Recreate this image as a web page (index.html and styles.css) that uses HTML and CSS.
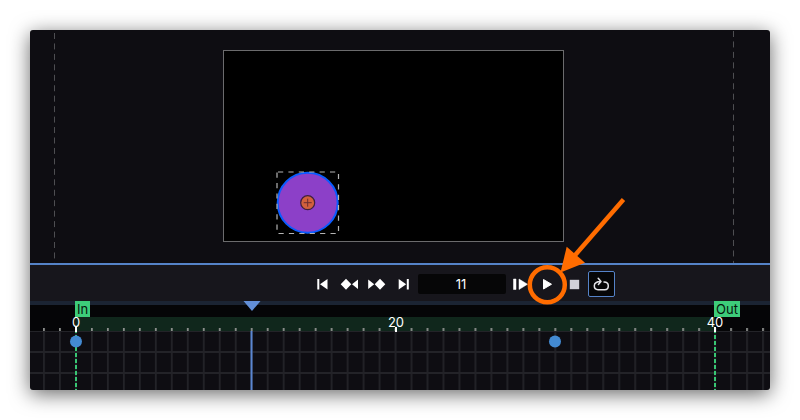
FILE: index.html
```html
<!DOCTYPE html>
<html lang="en">
<head>
<meta charset="utf-8">
<title>Animation editor</title>
<link rel="stylesheet" href="styles.css">
</head>
<body>
<main class="editor">
  <section class="viewport" aria-label="Canvas">
    <svg class="guide" aria-hidden="true"><path d="M0.5 3V233"/></svg>
    <div class="stage">
      <svg class="shape" viewBox="0 0 64 64" aria-label="Selected circle">
        <circle cx="31.7" cy="31.7" r="30" fill="#8c40c8" stroke="#0a5cff" stroke-width="2"/>
        <rect x="1" y="1" width="61.5" height="61.5" fill="none" stroke="#b4b4b4" stroke-width="1.2" stroke-dasharray="5.2 5.2" stroke-dashoffset="-1"/>
        <circle cx="31.7" cy="31.7" r="7" fill="#d2603c" stroke="#40203c" stroke-width="1.2"/>
        <path d="M31.7 27.7v8M27.7 31.7h8" stroke="#6a2c30" stroke-width="1"/>
      </svg>
    </div>
    <svg class="guide" aria-hidden="true"><path d="M0.5 1V233"/></svg>
  </section>

  <section class="controls" aria-label="Playback">
    <button class="control" aria-label="Go to start"><svg viewBox="0 0 27 26"><path d="M8.3 8h2v10.500h-2zM18.500 8v10.500L11 13.250z"/></svg></button>
    <button class="control" aria-label="Previous keyframe"><svg viewBox="0 0 27 26"><path d="M10 7.700L15.300 13.200L10 18.700L4.700 13.200zM22 8.500v9.500L16 13.250z"/></svg></button>
    <button class="control" aria-label="Next keyframe"><svg viewBox="0 0 27 26"><path d="M17 7.700L22.300 13.200L17 18.700L11.700 13.200zM5.200 8.500v9.500L11.200 13.250z"/></svg></button>
    <button class="control" aria-label="Go to end"><svg viewBox="0 0 27 26"><path d="M16.800 8h2v10.500h-2zM8.700 8v10.500L16.200 13.250z"/></svg></button>
    <input class="frame" type="text" value="11" aria-label="Current frame">
    <button class="control" aria-label="Step forward"><svg viewBox="0 0 27 26"><path d="M6.500 8H9v10.500H6.500zM12 8v10.500L20.500 13.250z" stroke="#fff" stroke-width="0.500"/></svg></button>
    <button class="control play" aria-label="Play"><svg viewBox="0 0 27 26"><path d="M9.500 8.500v9.500L17.500 13.250z" stroke="#fff" stroke-linejoin="round"/></svg>
      <svg class="callout" viewBox="0 0 110 120" aria-hidden="true">
        <circle cx="24.300" cy="92.700" r="17.500"/>
        <path d="M100.500 7.500L50 65.500"/>
        <path class="head" d="M37.500 80.500L43.700 54.700L62 70.700z"/>
      </svg>
    </button>
    <button class="control" aria-label="Stop"><svg viewBox="0 0 27 26"><path d="M8.800 8.800h9.400v9.400H8.800z" fill="#d2d1d9"/></svg></button>
    <button class="control loop" aria-label="Loop" aria-pressed="true"><svg viewBox="0 0 27 26"><path d="M12.500 10.800H10M8.300 11.500C6.900 12.200 6.300 13.300 6.300 14.800C6.300 17 7.500 18.700 10 18.700H16.800C19.300 18.700 20.300 17 20.300 14.700S19.300 10.900 16 10.900M8.300 11.500L10 10.800M10.200 7.300L13 10.500L10.400 13.500" fill="none" stroke="#e4e4e8" stroke-width="1.500" stroke-linecap="round" stroke-linejoin="round"/></svg></button>
  </section>

  <section class="timeline" aria-label="Timeline">
    <svg class="grid" aria-hidden="true">
      <defs>
        <pattern id="columns" x="45" y="41" width="15.980" height="21" patternUnits="userSpaceOnUse">
          <path d="M0 10h16" stroke="#232328" stroke-width="2"/>
          <path d="M0.900 0v21" stroke="#232328" stroke-width="1.800"/>
        </pattern>
        <pattern id="ticks" x="45" y="0" width="15.980" height="40" patternUnits="userSpaceOnUse">
          <path d="M0 27h1.800v3H0z" fill="#8f918f"/>
        </pattern>
      </defs>
      <rect width="100%" height="4" fill="#1b2433"/>
      <rect y="4" width="100%" height="26" fill="#050507"/>
      <rect x="45" y="16" width="640" height="14" fill="#10271c"/>
      <rect y="30" width="100%" height="59" fill="url(#columns)"/>
      <rect y="26" width="100%" height="4" fill="url(#ticks)"/>
      <path d="M46 28v61M685 28v61" stroke="#38c673" stroke-width="2" stroke-dasharray="4 2"/>
      <path d="M46 26v5M366 26v5M685 26v5" stroke="#fff" stroke-width="2"/>
      <path d="M221.500 30v59" stroke="#5a86d2" stroke-width="2"/>
      <path d="M213.500 0h17L222 10z" fill="#628fd8"/>
      <circle cx="46" cy="40.500" r="6" fill="#438ad2"/>
      <circle cx="525" cy="40.500" r="6" fill="#438ad2"/>
    </svg>
    <span class="flag start">In</span>
    <span class="flag end">Out</span>
    <span class="number start">0</span>
    <span class="number middle">20</span>
    <span class="number end">40</span>
  </section>
</main>
</body>
</html>
```
FILE: styles.css
```css
* {
  box-sizing: border-box;
}

body {
  margin: 0;
  padding: 30px;
  background: #fff;
  font-family: Inter, "Liberation Sans", sans-serif;
}

.editor {
  border-radius: 3px;
  background: #0e0d12;
  box-shadow: 0 4px 20px rgba(0, 0, 0, 0.6);
}

.viewport {
  display: flex;
  justify-content: space-between;
  padding: 0 36px 0 24px;
  border-bottom: 2px solid #5583c8;
}

.guide {
  width: 1px;
  height: 233px;
  stroke: #4e4e52;
  stroke-width: 1;
  stroke-dasharray: 6 4.45;
}

.stage {
  position: relative;
  width: 341px;
  height: 192px;
  margin: 20px 1px 21px 0;
  border: 1px solid #6b6b6d;
  background: #000;
}

.shape {
  position: absolute;
  left: 52px;
  top: 120px;
  width: 64px;
  height: 64px;
}

.controls {
  display: flex;
  align-items: center;
  height: 36px;
  padding: 2px 0 0 279px;
  background: #17161c;
}

.control {
  display: block;
  width: 27px;
  height: 26px;
  padding: 0;
  border: 0;
  background: none;
}

.control svg {
  display: block;
  width: 27px;
  height: 26px;
  fill: #fff;
}

.frame {
  width: 88px;
  height: 20px;
  margin: 0 1px;
  padding: 0 2px 0 0;
  border: 0;
  border-radius: 2px;
  background: #060607;
  color: #fff;
  font: 13px Inter, "Liberation Sans", sans-serif;
  text-align: center;
}

.play {
  position: relative;
}

.control .callout {
  position: absolute;
  left: -11px;
  top: -79px;
  z-index: 1;
  width: 110px;
  height: 120px;
  fill: none;
  stroke: #ff6c00;
  stroke-width: 4.5;
  pointer-events: none;
}

.callout .head {
  fill: #ff6c00;
  stroke: none;
}

.loop {
  outline: 1px solid #5583c8;
  outline-offset: -1px;
  border-radius: 2px;
  background: #060607;
}

.timeline {
  position: relative;
  overflow: hidden;
  border-radius: 0 0 3px 3px;
}

.grid {
  display: block;
  width: 100%;
  height: 89px;
}

.flag,
.number {
  position: absolute;
  font-size: 13px;
  line-height: 16px;
}

.flag {
  top: 0;
  padding: 0 2px;
  background: #3dcc7a;
  color: #07150d;
}

.flag.start {
  left: 45px;
}

.flag.end {
  left: 684px;
}

.number {
  top: 13px;
  color: #fff;
  transform: translateX(-50%);
}

.number.start {
  left: 46px;
}

.number.middle {
  left: 366px;
}

.number.end {
  left: 685px;
}
```
